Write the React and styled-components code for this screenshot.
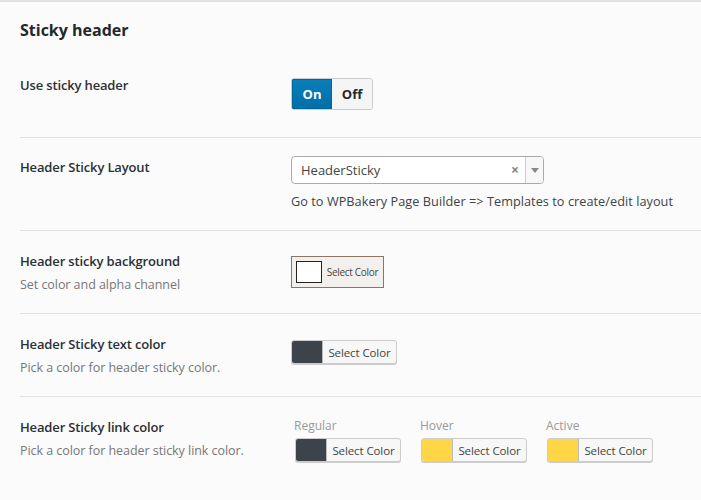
import React from "react";
import styled, { createGlobalStyle } from "styled-components";

const GlobalStyle = createGlobalStyle`
  html, body {
    margin: 0;
    padding: 0;
    background: #fbfbfb;
  }
  body {
    font-family: "Open Sans", "Noto Sans", sans-serif;
    color: #23282d;
  }
`;

const Panel = styled.div`
  width: 701px;
  height: 500px;
  overflow: hidden;
  border-top: 2px solid #e2e2e2;
  background: #fbfbfb;
  box-sizing: border-box;
`;

const SectionTitle = styled.h2`
  margin: 0;
  padding: 17px 20px 0 20px;
  font-size: 16px;
  font-weight: 700;
  line-height: 22px;
  color: #23282d;
  height: 56px;
  box-sizing: border-box;
`;

const Row = styled.div`
  display: grid;
  grid-template-columns: 271px 1fr;
  margin-left: 20px;
  padding-top: ${(p) => p.$top}px;
  height: ${(p) => p.$h}px;
  box-sizing: border-box;
  border-bottom: ${(p) => (p.$last ? "none" : "1px solid #e3e3e3")};
`;

const LabelCol = styled.div`
  display: flex;
  flex-direction: column;
  gap: 5px;
`;

const Label = styled.div`
  font-size: 13px;
  font-weight: 600;
  line-height: 19px;
  color: #2b3035;
  letter-spacing: -0.15px;
`;

const Sub = styled.div`
  font-size: 12.5px;
  line-height: 18px;
  color: #777;
  letter-spacing: -0.05px;
`;

const FieldCol = styled.div`
  display: flex;
  flex-direction: column;
`;

const Toggle = styled.div`
  display: flex;
  width: 82px;
  height: 32px;
  margin-top: 2px;
  border-radius: 3px;
  overflow: hidden;
  border: 1px solid #ccc;
  box-sizing: border-box;
`;

const ToggleBtn = styled.div`
  flex: 1;
  display: flex;
  align-items: center;
  justify-content: center;
  font-size: 13px;
  font-weight: 700;
  color: ${(p) => (p.$active ? "#fff" : "#23282d")};
  background: ${(p) => (p.$active ? "linear-gradient(#0a7fbb, #006ea8)" : "#f5f5f5")};
  box-shadow: ${(p) => (p.$active ? "inset 0 0 0 1px #006799" : "none")};
`;

const Select = styled.div`
  display: flex;
  align-items: center;
  width: 253px;
  height: 28px;
  margin-top: -2px;
  border: 1px solid #aaa;
  border-radius: 4px;
  background: #fff;
  box-sizing: border-box;
  overflow: hidden;
`;

const SelectValue = styled.div`
  flex: 1;
  padding-left: 9px;
  font-size: 13px;
  color: #444;
`;

const ClearX = styled.div`
  width: 20px;
  text-align: center;
  font-size: 14px;
  font-weight: 700;
  color: #888;
  line-height: 1;
`;

const Arrow = styled.div`
  width: 17px;
  height: 100%;
  border-left: 1px solid #ccc;
  display: flex;
  align-items: center;
  justify-content: center;
  background: #f7f7f7;
`;

const Help = styled.div`
  margin-top: 8px;
  font-size: 12.7px;
  color: #3c434a;
  letter-spacing: 0.05px;
`;

const ColorBtn = styled.div`
  display: flex;
  align-items: center;
  width: ${(p) => (p.$boxed ? 93 : 106)}px;
  height: ${(p) => (p.$boxed ? 32 : 24)}px;
  border: 1px solid ${(p) => (p.$boxed ? "#8c7467" : "#ccc")};
  border-radius: ${(p) => (p.$boxed ? 0 : 3)}px;
  background: ${(p) => (p.$boxed ? "#f3efec" : "#f7f7f7")};
  box-sizing: border-box;
  overflow: hidden;
  align-self: flex-start;
  margin-top: ${(p) => p.$mt || 0}px;
  box-shadow: ${(p) => (p.$boxed ? "none" : "0 1px 0 #ccc")};
`;

const Swatch = styled.div`
  width: ${(p) => (p.$boxed ? 26 : 31)}px;
  height: ${(p) => (p.$boxed ? 22 : 24)}px;
  margin-left: ${(p) => (p.$boxed ? 4 : 0)}px;
  background: ${(p) => p.$color};
  border: ${(p) => (p.$boxed ? "1px solid #222" : "none")};
  border-right: ${(p) => (p.$boxed ? "1px solid #222" : "1px solid #bbb")};
  box-sizing: border-box;
  flex-shrink: 0;
`;

const BtnText = styled.div`
  flex: 1;
  text-align: center;
  white-space: nowrap;
  font-size: ${(p) => (p.$boxed ? 10 : 11.5)}px;
  color: #444;
  letter-spacing: ${(p) => (p.$boxed ? "-0.3px" : "-0.1px")};
`;

const Group = styled.div`
  display: flex;
  gap: 20px;
  margin-top: 0px;
  margin-left: 4px;
`;

const GroupItem = styled.div`
  display: flex;
  flex-direction: column;
`;

const GroupLabel = styled.div`
  font-size: 12px;
  color: #999;
  line-height: 16px;
  margin-bottom: 4px;
  margin-left: -1px;
`;

function ColorPicker({ color, boxed, mt }) {
  return (
    <ColorBtn $boxed={boxed} $mt={mt}>
      <Swatch $color={color} $boxed={boxed} />
      <BtnText $boxed={boxed}>Select Color</BtnText>
    </ColorBtn>
  );
}

export default function App() {
  return (
    <>
      <GlobalStyle />
      <Panel>
        <SectionTitle>Sticky header</SectionTitle>

        <Row $top={18} $h={80}>
          <LabelCol>
            <Label>Use sticky header</Label>
          </LabelCol>
          <FieldCol>
            <Toggle>
              <ToggleBtn $active>On</ToggleBtn>
              <ToggleBtn>Off</ToggleBtn>
            </Toggle>
          </FieldCol>
        </Row>

        <Row $top={20} $h={93}>
          <LabelCol>
            <Label>Header Sticky Layout</Label>
          </LabelCol>
          <FieldCol>
            <Select>
              <SelectValue>HeaderSticky</SelectValue>
              <ClearX>×</ClearX>
              <Arrow>
                <svg width="8" height="5" viewBox="0 0 8 5">
                  <path d="M0 0 L8 0 L4 5 Z" fill="#888" />
                </svg>
              </Arrow>
            </Select>
            <Help>Go to WPBakery Page Builder =&gt; Templates to create/edit layout</Help>
          </FieldCol>
        </Row>

        <Row $top={21} $h={83}>
          <LabelCol>
            <Label>Header sticky background</Label>
            <Sub>Set color and alpha channel</Sub>
          </LabelCol>
          <FieldCol>
            <ColorPicker color="#fff" boxed mt={4} />
          </FieldCol>
        </Row>

        <Row $top={21} $h={83}>
          <LabelCol>
            <Label>Header Sticky text color</Label>
            <Sub>Pick a color for header sticky color.</Sub>
          </LabelCol>
          <FieldCol>
            <ColorPicker color="#3c434a" mt={5} />
          </FieldCol>
        </Row>

        <Row $top={21} $h={100} $last>
          <LabelCol>
            <Label>Header Sticky link color</Label>
            <Sub>Pick a color for header sticky link color.</Sub>
          </LabelCol>
          <Group>
            <GroupItem>
              <GroupLabel>Regular</GroupLabel>
              <ColorPicker color="#3c434a" />
            </GroupItem>
            <GroupItem>
              <GroupLabel>Hover</GroupLabel>
              <ColorPicker color="#ffd646" />
            </GroupItem>
            <GroupItem>
              <GroupLabel>Active</GroupLabel>
              <ColorPicker color="#ffd646" />
            </GroupItem>
          </Group>
        </Row>
      </Panel>
    </>
  );
}
